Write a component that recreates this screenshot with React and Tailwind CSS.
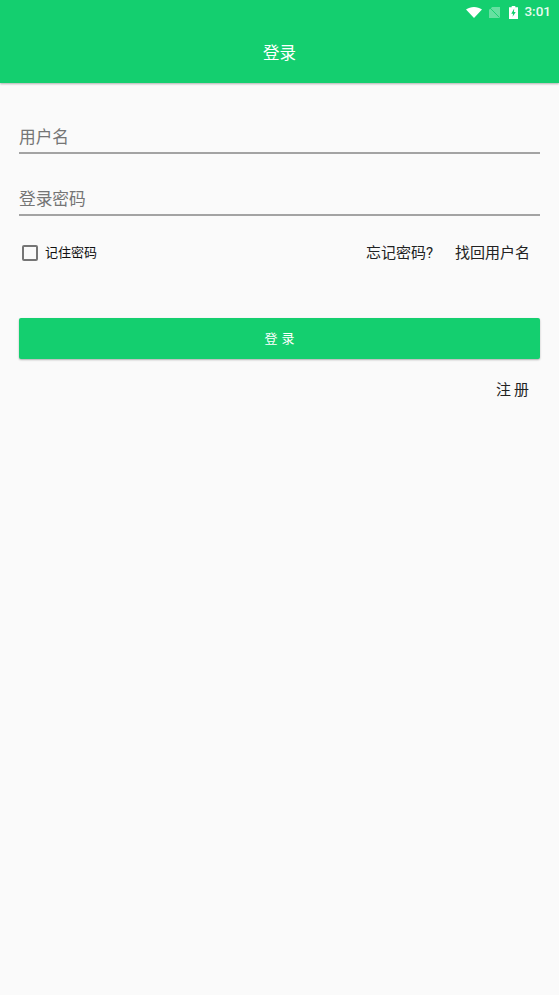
import React from "react";

const font = { fontFamily: '"Roboto", "Noto Sans CJK SC", sans-serif' };

const StatusBar = () => {
  return (
    <div className="h-6 flex items-center justify-end pr-[8px]">
      <svg width="16" height="11" viewBox="0 0 16 12" preserveAspectRatio="none" className="mr-[7px]">
        <path d="M8 12 0 2.600C2.300 1 5 0 8 0s5.700 1 8 2.600z" fill="#fff" />
      </svg>
      <svg width="11" height="11" viewBox="0 0 11 13" preserveAspectRatio="none" className="mr-[9px]">
        <path d="M3.200 0H11v13H0V3.200z" fill="#fff" fillOpacity="0.35" />
        <path d="M0.500 0.500 10.500 12.500" stroke="#14cf6f" strokeWidth="1" />
      </svg>
      <svg width="9" height="13" viewBox="0 0 10 15" preserveAspectRatio="none" className="mr-[6px]">
        <path d="M3 0h4v1.500h3V15H0V1.500h3z" fill="#fff" />
        <path d="M5.800 3 2.500 8.800h2L4 12.500l3.500-5.600h-2z" fill="#14cf6f" />
      </svg>
      <span className="text-[13.500px] font-medium text-[#e8fbf1] leading-none">3:01</span>
    </div>
  );
};

const Field = ({ label }) => {
  return (
    <div className="h-[29px] pt-[1px] border-b-[2px] border-[#a3a3a3]">
      <span className="block text-[16.700px] leading-[24px] text-[#757575]">{label}</span>
    </div>
  );
};

const App = () => {
  return (
    <div className="min-h-[995px] bg-[#fafafa] flex flex-col" style={font}>
      {/* Header */}
      <header className="h-[83px] bg-[#14cf6f] shadow-[0_1px_2px_rgba(0,0,0,0.3)]">
        <StatusBar />
        <div className="h-[59px] flex items-center justify-center pt-[1px]">
          <h1 className="text-[16.500px] text-white font-normal">登录</h1>
        </div>
      </header>

      {/* Form */}
      <main className="px-[19px] pt-[42px]">
        <Field label="用户名" />
        <div className="mt-[33px]">
          <Field label="登录密码" />
        </div>

        <div className="mt-[25px] h-6 flex items-center">
          <span className="ml-[3px] w-[16px] h-[16px] border-[2px] border-[#757575] rounded-[2px]"></span>
          <span className="ml-[7px] text-[13px] text-[#111]">记住密码</span>
          <span className="ml-auto text-[15px] text-[#222]">忘记密码?</span>
          <span className="ml-[22px] mr-[10px] text-[15px] text-[#222]">找回用户名</span>
        </div>

        <button className="mt-[53px] w-full h-[41px] bg-[#14cf6f] rounded-[2px] shadow-[0_1px_2px_rgba(0,0,0,0.3)] text-white text-[13px] tracking-[4px] pl-[4px] flex items-center justify-center">
          登录
        </button>

        <div className="mt-[20px] flex justify-end pr-[11px]">
          <span className="text-[15px] leading-[22px] tracking-[3px] mr-[-3px] text-[#222]">注册</span>
        </div>
      </main>
    </div>
  );
};

export default App;
